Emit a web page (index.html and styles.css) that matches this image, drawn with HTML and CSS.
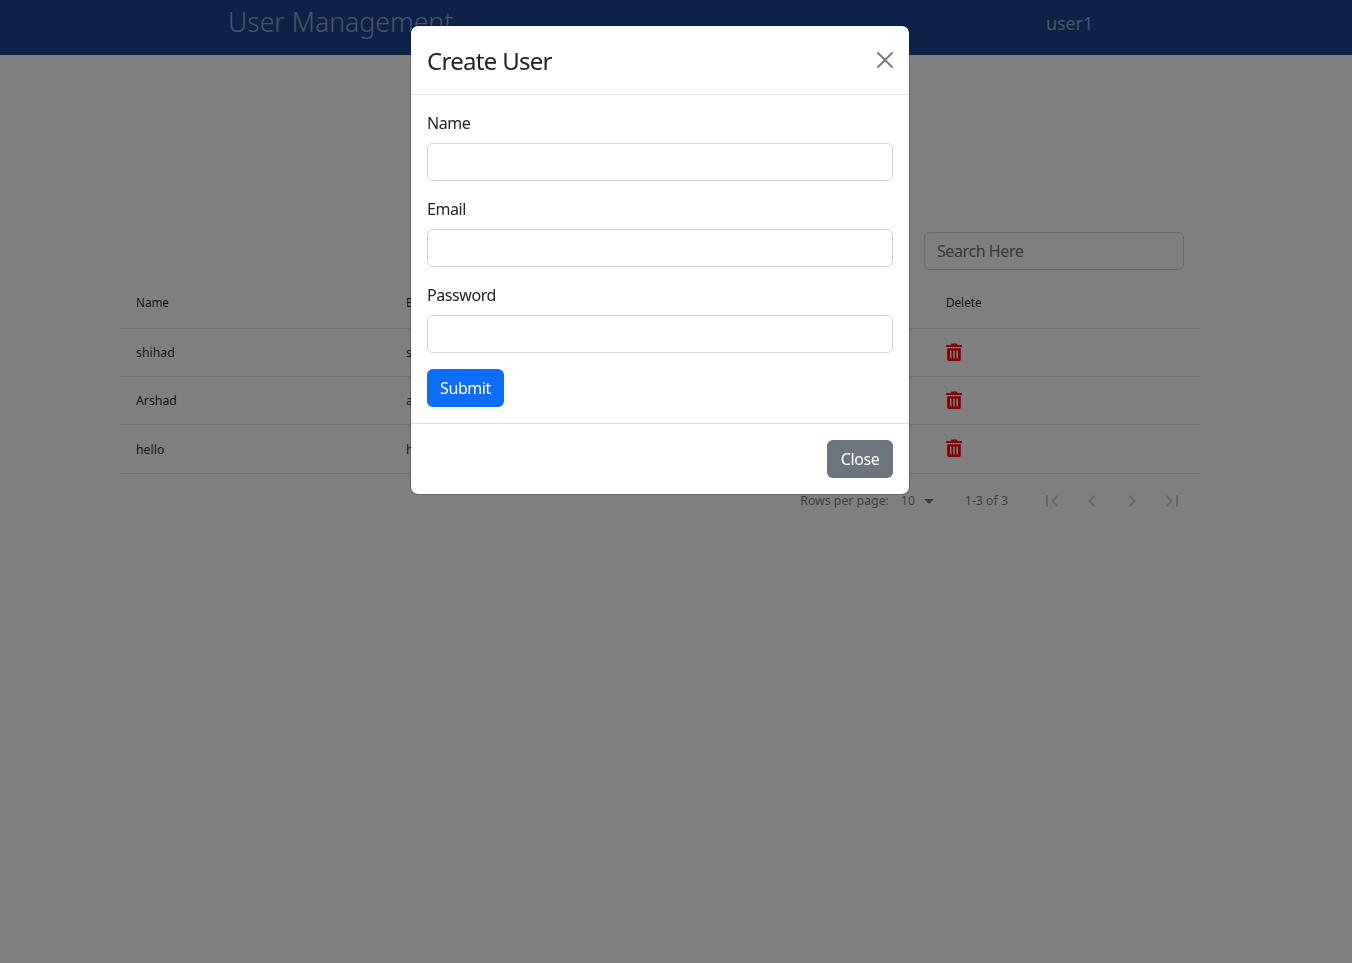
FILE: index.html
```html
<!DOCTYPE html>
<html lang="en">
<head>
<meta charset="utf-8">
<title>User Management</title>
<link rel="stylesheet" href="styles.css">
</head>
<body>
<header class="navbar">
  <h1 class="brand">User Management</h1>
  <span class="nav-user">user1</span>
</header>
<main class="content">
  <div class="toolbar">
    <input class="search" type="text" placeholder="Search Here">
  </div>
  <div class="table">
    <div class="row head">
      <div class="cell">Name</div><div class="cell">Email</div><div class="cell">Edit</div><div class="cell">Delete</div>
    </div>
    <div class="row">
      <div class="cell">shihad</div><div class="cell">shihad@gmail.com</div><div class="cell"></div>
      <div class="cell cell-icon"><svg class="trash" viewBox="0 0 16 18"><path d="M5.500 0.500h5l1 1.500H15a1 1 0 0 1 1 1V4H0V3a1 1 0 0 1 1-1h3.500zM1.200 5.200h13.600V16.300a1.700 1.700 0 0 1-1.700 1.700H2.900a1.700 1.700 0 0 1-1.700-1.700zM4 7.500v8h1.500v-8zM7.250 7.500v8h1.500v-8zM10.500 7.500v8H12v-8z" fill-rule="evenodd"/></svg></div>
    </div>
    <div class="row">
      <div class="cell">Arshad</div><div class="cell">arshad@gmail.com</div><div class="cell"></div>
      <div class="cell cell-icon"><svg class="trash" viewBox="0 0 16 18"><path d="M5.500 0.500h5l1 1.500H15a1 1 0 0 1 1 1V4H0V3a1 1 0 0 1 1-1h3.500zM1.200 5.200h13.600V16.300a1.700 1.700 0 0 1-1.700 1.700H2.900a1.700 1.700 0 0 1-1.700-1.700zM4 7.500v8h1.500v-8zM7.250 7.500v8h1.500v-8zM10.500 7.500v8H12v-8z" fill-rule="evenodd"/></svg></div>
    </div>
    <div class="row tall">
      <div class="cell">hello</div><div class="cell">hello@gmail.com</div><div class="cell"></div>
      <div class="cell cell-icon"><svg class="trash" viewBox="0 0 16 18"><path d="M5.500 0.500h5l1 1.500H15a1 1 0 0 1 1 1V4H0V3a1 1 0 0 1 1-1h3.500zM1.200 5.200h13.600V16.300a1.700 1.700 0 0 1-1.700 1.700H2.900a1.700 1.700 0 0 1-1.700-1.700zM4 7.500v8h1.500v-8zM7.250 7.500v8h1.500v-8zM10.500 7.500v8H12v-8z" fill-rule="evenodd"/></svg></div>
    </div>
    <div class="pager">
      <span class="pager-label">Rows per page:</span>
      <span class="pager-size">10</span>
      <svg class="pager-caret" viewBox="0 0 24 24"><path d="M7 10l5 5 5-5z"/></svg>
      <span class="pager-range">1-3 of 3</span>
      <button class="pager-btn"><svg viewBox="0 0 24 24"><path d="M18.410 16.590L13.820 12l4.590-4.590L17 6l-6 6 6 6zM6 6h2v12H6z"/></svg></button>
      <button class="pager-btn"><svg viewBox="0 0 24 24"><path d="M15.410 7.410L14 6l-6 6 6 6 1.410-1.410L10.830 12z"/></svg></button>
      <button class="pager-btn"><svg viewBox="0 0 24 24"><path d="M10 6L8.590 7.410 13.170 12l-4.580 4.590L10 18l6-6z"/></svg></button>
      <button class="pager-btn"><svg viewBox="0 0 24 24"><path d="M5.590 7.410L10.180 12l-4.590 4.590L7 18l6-6-6-6zM16 6h2v12h-2z"/></svg></button>
    </div>
  </div>
</main>
<div class="backdrop"></div>
<div class="modal-wrap">
  <div class="modal">
    <div class="modal-header">
      <h5 class="modal-title">Create User</h5>
      <svg class="modal-x" viewBox="0 0 16 16"><path d="M.293.293a1 1 0 0 1 1.414 0L8 6.586 14.293.293a1 1 0 1 1 1.414 1.414L9.414 8l6.293 6.293a1 1 0 0 1-1.414 1.414L8 9.414l-6.293 6.293a1 1 0 0 1-1.414-1.414L6.586 8 .293 1.707a1 1 0 0 1 0-1.414z"/></svg>
    </div>
    <form class="modal-body">
      <div class="field"><label class="field-label">Name</label><input class="field-input" type="text"></div>
      <div class="field"><label class="field-label">Email</label><input class="field-input" type="text"></div>
      <div class="field"><label class="field-label">Password</label><input class="field-input" type="password"></div>
      <button class="btn btn-primary" type="button">Submit</button>
    </form>
    <div class="modal-footer">
      <button class="btn btn-secondary" type="button">Close</button>
    </div>
  </div>
</div>
</body>
</html>
```
FILE: styles.css
```css
* { box-sizing: border-box; }
html, body { height: 100%; }
body {
  margin: 0;
  background: #fff;
  color: #212529;
  font-family: "Noto Sans", sans-serif;
  font-size: 16px;
  letter-spacing: -.42px;
  line-height: 24px;
}
.navbar {
  height: 55px;
  background: #1a4492;
  display: flex;
  align-items: flex-start;
  color: rgba(255, 255, 255, .55);
}
.brand {
  margin: 3px 0 0 228px;
  font-size: 26.600px;
  font-weight: 300;
  letter-spacing: 0;
  line-height: 39px;
  width: 818px;
}
.nav-user { font-size: 17.800px; letter-spacing: 0; line-height: 27px; margin-top: 10px; }
.content { padding: 177px 152px 0 120px; }
.toolbar { display: flex; justify-content: flex-end; padding-right: 16px; }
.search {
  width: 260px;
  height: 38px;
  padding: 6px 12px;
  border: 1px solid #ced4da;
  border-radius: 6px;
  font: inherit;
  letter-spacing: inherit;
  background: #fff;
}
.search::placeholder { color: #6c757d; opacity: 1; }
.table { margin-top: 10px; font-size: 12.300px; letter-spacing: 0; color: rgba(0, 0, 0, .87); }
.row {
  display: grid;
  grid-template-columns: repeat(4, 270px);
  height: 48px;
  border-bottom: 1px solid rgba(0, 0, 0, .12);
}
.row.tall { height: 49px; }
.row.tall .cell { padding-top: 1px; }
.row.head { height: 49px; font-size: 11.700px; }
.row.head .cell { padding-bottom: 5px; }
.cell { display: flex; align-items: center; padding: 0 16px; }
.cell-icon { padding-bottom: 1px; }
.row.tall .cell-icon { padding-top: 0; padding-bottom: 2px; }
.trash { width: 16px; height: 18px; fill: #f00; }
.pager {
  display: flex;
  align-items: center;
  justify-content: flex-end;
  height: 53px;
  padding-right: 8px;
  color: rgba(0, 0, 0, .54);
}
.pager-label { margin-right: 12px; }
.pager-size { width: 16px; }
.pager-caret { width: 24px; height: 24px; fill: rgba(0, 0, 0, .54); margin-right: 24px; }
.pager-range { margin-right: 24px; white-space: nowrap; }
.pager-btn {
  width: 40px;
  height: 40px;
  padding: 8px;
  border: 0;
  background: none;
  fill: rgba(0, 0, 0, .18);
}
.backdrop {
  position: fixed;
  inset: 0;
  background: rgba(0, 0, 0, .5);
}
.modal-wrap {
  position: fixed;
  inset: 0;
  display: flex;
  justify-content: center;
  align-items: flex-start;
  padding: 25px 32px 0 0;
}
.modal {
  width: 500px;
  background: #fff;
  border: 1px solid rgba(0, 0, 0, .2);
  border-radius: 8px;
  background-clip: padding-box;
}
.modal-header {
  display: flex;
  align-items: center;
  justify-content: space-between;
  padding: 16px;
  height: 69px;
  border-bottom: 1px solid #dee2e6;
}
.modal-title { margin: 2px 0 0; font-size: 24px; letter-spacing: -.7px; font-weight: 400; line-height: 36px; }
.modal-x { width: 16px; height: 16px; opacity: .5; }
.modal-body { padding: 16px; }
.field { margin-bottom: 16px; }
.field-label { display: block; margin-bottom: 8px; }
.field-input {
  display: block;
  width: 100%;
  height: 38px;
  padding: 6px 12px;
  border: 1px solid #ced4da;
  border-radius: 6px;
  font: inherit;
}
.modal-footer {
  display: flex;
  justify-content: flex-end;
  padding: 16px;
  border-top: 1px solid #dee2e6;
}
.btn {
  display: block;
  height: 38px;
  padding: 6px 12px;
  border: 1px solid transparent;
  border-radius: 6px;
  color: #fff;
  font: inherit;
  letter-spacing: inherit;
}
.btn-primary { background: #0d6efd; min-width: 77px; }
.btn-secondary { background: #6c757d; min-width: 66px; }
```
